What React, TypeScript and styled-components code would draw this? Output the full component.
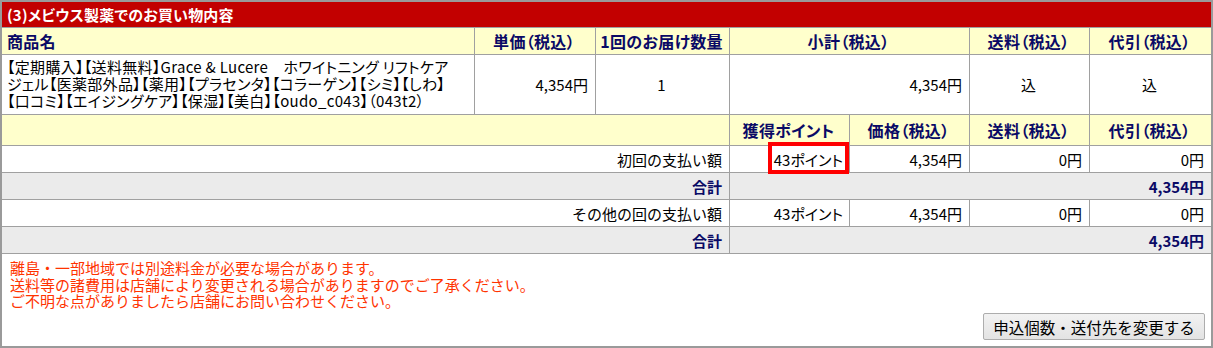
import React from "react";
import styled, { createGlobalStyle, css } from "styled-components";

const Global = createGlobalStyle`
  html, body { margin: 0; padding: 0; background: #ffffff; }
  body {
    font-family: "Noto Sans CJK JP", "Noto Sans", sans-serif;
    font-size: 15px;
    color: #000;
  }
`;

const Frame = styled.div`
  width: 1213px;
  height: 348px;
  box-sizing: border-box;
  border: 2px solid #9a9a9a;
  background: #a0a0a0;
`;

const Grid = styled.div`
  display: grid;
  grid-template-columns: 472px 120px 133px 119px 119px 119px 1fr;
  grid-template-rows: 25px 26px 59px 30px 26px 26px 26px 26px 92px;
  gap: 1px;
  background: #a0a0a0;
`;

const TitleBar = styled.div`
  grid-column: 1 / -1;
  background: #c20000;
  color: #ffffff;
  font-weight: 700;
  font-size: 15px;
  font-feature-settings: "palt";
  display: flex;
  align-items: center;
  padding-left: 5px;
  letter-spacing: 0.2px;
`;

type Align = "left" | "center" | "right";
const justify = (a: Align) =>
  a === "left" ? "flex-start" : a === "right" ? "flex-end" : "center";

const cellBase = css<{ $span?: string; $align?: Align }>`
  grid-column: ${(p) => p.$span ?? "auto"};
  display: flex;
  align-items: center;
  justify-content: ${(p) => justify(p.$align ?? "center")};
  padding: 0 7px 0 5px;
  line-height: 17px;
  white-space: nowrap;
`;

const HeadCell = styled.div<{ $span?: string; $align?: Align }>`
  ${cellBase};
  background: #ffffcc;
  color: #0a0a66;
  font-weight: 700;
  font-size: 16px;
  font-feature-settings: "palt";
  letter-spacing: 0.3px;
`;

const Cell = styled.div<{ $span?: string; $align?: Align }>`
  ${cellBase};
  background: #ffffff;
  color: #000;
  padding-right: 7px;
`;

const ProductCell = styled.div`
  background: #ffffff;
  padding: 4px 5px;
  display: flex;
  align-items: center;
  line-height: 16.7px;
  font-feature-settings: "palt";
  letter-spacing: 0.3px;
`;

const PointCell = styled(Cell)<{ $marked?: boolean }>`
  position: relative;
  padding-right: 6px;
  font-feature-settings: "palt";
  ${(p) =>
    p.$marked &&
    css`
      &::after {
        content: "";
        position: absolute;
        left: 38px;
        top: -4px;
        right: 0;
        bottom: -2px;
        border: 4px solid #ff0000;
      }
    `}
`;

const TotalCell = styled.div<{ $span?: string }>`
  ${cellBase};
  justify-content: flex-end;
  background: #ebebeb;
  color: #0a0a66;
  font-weight: 700;
  padding-right: 7px;
`;

const NotesCell = styled.div`
  grid-column: 1 / -1;
  background: #ffffff;
  display: flex;
  flex-direction: column;
  padding: 6px 6px 6px 8px;
`;

const NoteText = styled.p`
  margin: 0;
  color: #ff3300;
  line-height: 16.7px;
`;

const ChangeButton = styled.button`
  margin-top: auto;
  align-self: flex-end;
  width: 222px;
  height: 27px;
  font-family: inherit;
  font-size: 15.5px;
  color: #000;
  background: linear-gradient(#f2f2f2, #e3e3e3);
  border: 1px solid #adadad;
  border-radius: 2px;
  padding: 0;
  cursor: pointer;
`;

export default function App() {
  return (
    <>
      <Global />
      <Frame>
        <Grid>
          <TitleBar>(3)メビウス製薬でのお買い物内容</TitleBar>

          <HeadCell $align="left">商品名</HeadCell>
          <HeadCell>単価（税込）</HeadCell>
          <HeadCell>1回のお届け数量</HeadCell>
          <HeadCell $span="span 2">小計（税込）</HeadCell>
          <HeadCell>送料（税込）</HeadCell>
          <HeadCell>代引（税込）</HeadCell>

          <ProductCell>
            <span>
              【定期購入】【送料無料】Grace &amp; Lucere　ホワイトニング リフトケア
              <br />
              ジェル【医薬部外品】【薬用】【プラセンタ】【コラーゲン】【シミ】【しわ】
              <br />
              【口コミ】【エイジングケア】【保湿】【美白】【oudo_c043】（043t2）
            </span>
          </ProductCell>
          <Cell $align="right">4,354円</Cell>
          <Cell>1</Cell>
          <Cell $span="span 2" $align="right">4,354円</Cell>
          <Cell>込</Cell>
          <Cell>込</Cell>

          <HeadCell $span="span 3" />
          <HeadCell>獲得ポイント</HeadCell>
          <HeadCell>価格（税込）</HeadCell>
          <HeadCell>送料（税込）</HeadCell>
          <HeadCell>代引（税込）</HeadCell>

          <Cell $span="span 3" $align="right">初回の支払い額</Cell>
          <PointCell $align="right" $marked>43ポイント</PointCell>
          <Cell $align="right">4,354円</Cell>
          <Cell $align="right">0円</Cell>
          <Cell $align="right">0円</Cell>

          <TotalCell $span="span 3">合計</TotalCell>
          <TotalCell $span="span 4">4,354円</TotalCell>

          <Cell $span="span 3" $align="right">その他の回の支払い額</Cell>
          <PointCell $align="right">43ポイント</PointCell>
          <Cell $align="right">4,354円</Cell>
          <Cell $align="right">0円</Cell>
          <Cell $align="right">0円</Cell>

          <TotalCell $span="span 3">合計</TotalCell>
          <TotalCell $span="span 4">4,354円</TotalCell>

          <NotesCell>
            <NoteText>
              離島・一部地域では別途料金が必要な場合があります。
              <br />
              送料等の諸費用は店舗により変更される場合がありますのでご了承ください。
              <br />
              ご不明な点がありましたら店舗にお問い合わせください。
            </NoteText>
            <ChangeButton type="button">申込個数・送付先を変更する</ChangeButton>
          </NotesCell>
        </Grid>
      </Frame>
    </>
  );
}
